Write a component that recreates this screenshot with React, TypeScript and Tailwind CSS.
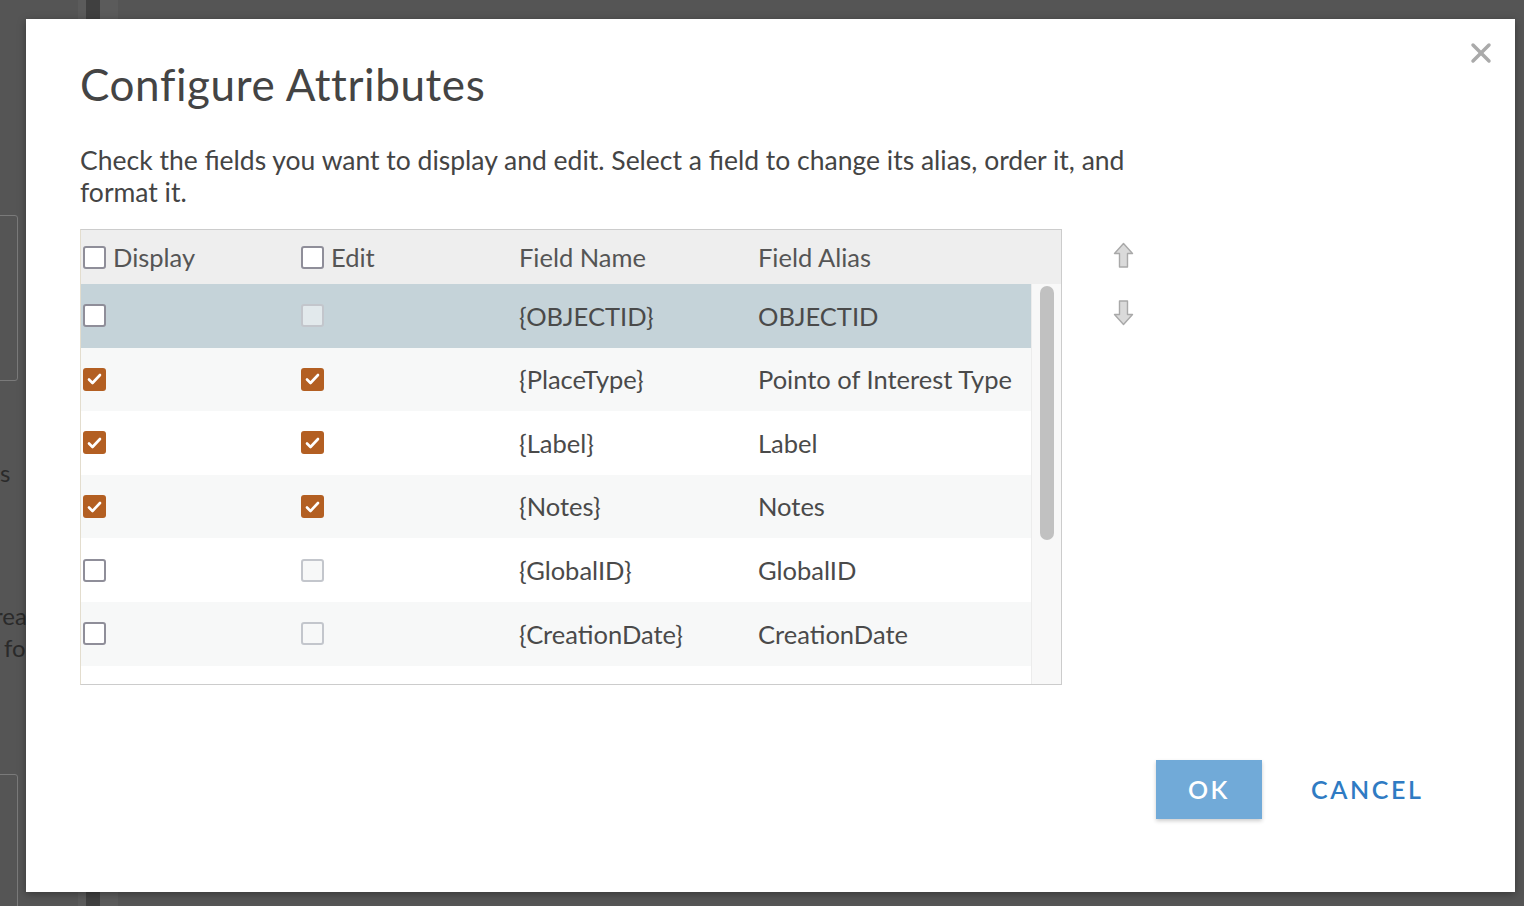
import { X } from "lucide-react";

type Row = {
  name: string;
  alias: string;
  display: boolean;
  edit: boolean;
  editable: boolean;
};

const rows: Row[] = [
  { name: "{OBJECTID}", alias: "OBJECTID", display: false, edit: false, editable: false },
  { name: "{PlaceType}", alias: "Pointo of Interest Type", display: true, edit: true, editable: true },
  { name: "{Label}", alias: "Label", display: true, edit: true, editable: true },
  { name: "{Notes}", alias: "Notes", display: true, edit: true, editable: true },
  { name: "{GlobalID}", alias: "GlobalID", display: false, edit: false, editable: false },
  { name: "{CreationDate}", alias: "CreationDate", display: false, edit: false, editable: false },
  { name: "", alias: "", display: false, edit: false, editable: false },
];

function Checkbox({ checked, disabled, selected }: { checked: boolean; disabled?: boolean; selected?: boolean }) {
  if (checked) {
    return (
      <span className="flex h-[23px] w-[23px] items-center justify-center rounded-[3px] bg-[#b35f22]">
        <svg width="15" height="12" viewBox="0 0 15 12">
          <polyline points="2,6.5 5.5,10 13,2" fill="none" stroke="#ffffff" strokeWidth="2.6" strokeLinecap="round" strokeLinejoin="round" />
        </svg>
      </span>
    );
  }
  if (disabled) {
    return (
      <span
        className={`block h-[23px] w-[23px] rounded-[3px] border-2 border-[#c3c6cc] ${selected ? "bg-[#e2e9ec]" : "bg-[#f7f8f8]"}`}
      />
    );
  }
  return <span className="block h-[23px] w-[23px] rounded-[3px] border-2 border-[#8f8e99] bg-white" />;
}

function ArrowIcon({ down }: { down?: boolean }) {
  return (
    <svg width="21" height="27" viewBox="0 0 21 27" className={down ? "rotate-180" : ""}>
      <path d="M10.5 1.5 L19.5 11.5 L14.5 11.5 L14.5 25 L6.5 25 L6.5 11.5 L1.5 11.5 Z" fill="#dadada" stroke="#a9a9a9" strokeWidth="1.4" strokeLinejoin="round" />
    </svg>
  );
}

export default function App() {
  return (
    <div className="relative h-[906px] w-[1524px] overflow-hidden bg-[#555555] font-['Lato',sans-serif]">
      {/* page behind the overlay */}
      <div className="absolute left-[78px] top-0 flex h-full w-[40px] bg-[#5b5b5b]">
        <div className="ml-[8px] h-full w-[14px] bg-[#404040]" />
      </div>
      <div className="absolute left-[-10px] top-[215px] h-[166px] w-[28px] rounded-[3px] border border-[#7a7a7a]" />
      <div className="absolute left-[-10px] top-[774px] h-[200px] w-[28px] rounded-[3px] border border-[#7a7a7a]" />
      <div className="absolute left-0 top-[455px] text-[24px] text-[#2a2a2a]">s</div>
      <div className="absolute left-[-6px] top-[600px] text-[24px] leading-[32px] text-[#2a2a2a]">
        <div>rea</div>
        <div className="pl-[10px]">fo</div>
      </div>

      {/* dialog */}
      <div className="absolute left-[26px] top-[19px] flex h-[873px] w-[1489px] flex-col bg-white pl-[54px] shadow-[0_2px_8px_rgba(0,0,0,0.35)]">
        <button className="absolute right-[18px] top-[18px] text-[#aaaaaa]">
          <X size={32} strokeWidth={2.6} />
        </button>

        <h1 className="mt-[37px] text-[44px] font-normal leading-[56px] tracking-[0.6px] text-[#444444]">Configure Attributes</h1>

        <p className="mt-[32px] w-[1100px] text-[26.5px] leading-[32px] text-[#444444]">
          Check the fields you want to display and edit. Select a field to change its alias, order it, and format it.
        </p>

        <div className="mt-[21px] flex items-start">
          <div className="flex h-[456px] w-[982px] flex-col border border-[#cccccc] border-l-[#e3ddce] text-[25.5px] text-[#4a4a4a]">
            <div className="grid h-[54px] shrink-0 grid-cols-[218px_218px_239px_1fr] items-center bg-[#eeeeee] pl-[2px] text-[#555555]">
              <div className="flex items-center gap-[7px]">
                <Checkbox checked={false} />
                <span>Display</span>
              </div>
              <div className="flex items-center gap-[7px]">
                <Checkbox checked={false} />
                <span>Edit</span>
              </div>
              <div>Field Name</div>
              <div>Field Alias</div>
            </div>

            <div className="flex min-h-0 flex-1 overflow-hidden">
              <div className="flex-1 overflow-hidden">
                {rows.map((r, i) => {
                  const bg = i === 0 ? "bg-[#c5d3d9]" : i % 2 === 1 ? "bg-[#f7f8f8]" : "bg-white";
                  return (
                    <div key={i} className={`grid h-[63.6px] grid-cols-[218px_218px_239px_1fr] items-center pl-[2px] ${bg}`}>
                      {r.name ? (
                        <>
                          <div>
                            <Checkbox checked={r.display} />
                          </div>
                          <div>
                            <Checkbox checked={r.edit} disabled={!r.editable} selected={i === 0} />
                          </div>
                          <div>{r.name}</div>
                          <div className="whitespace-nowrap">{r.alias}</div>
                        </>
                      ) : null}
                    </div>
                  );
                })}
              </div>
              <div className="flex w-[30px] shrink-0 justify-center border-l border-[#ececec] bg-[#f8f8f8] pt-[2px]">
                <div className="h-[254px] w-[14px] rounded-full bg-[#c1c1c1]" />
              </div>
            </div>
          </div>

          <div className="ml-[51px] mt-[13px] flex flex-col gap-[30px]">
            <ArrowIcon />
            <ArrowIcon down />
          </div>
        </div>

        <div className="mt-[75px] flex items-center gap-[49px] pl-[1076px]">
          <button className="h-[59px] w-[106px] bg-[#71aad8] text-[25px] font-semibold tracking-[2.5px] text-white shadow-[0_2px_4px_rgba(0,0,0,0.2)]">
            OK
          </button>
          <button className="text-[25px] font-semibold tracking-[2.6px] text-[#2f7bc3]">CANCEL</button>
        </div>
      </div>
    </div>
  );
}
